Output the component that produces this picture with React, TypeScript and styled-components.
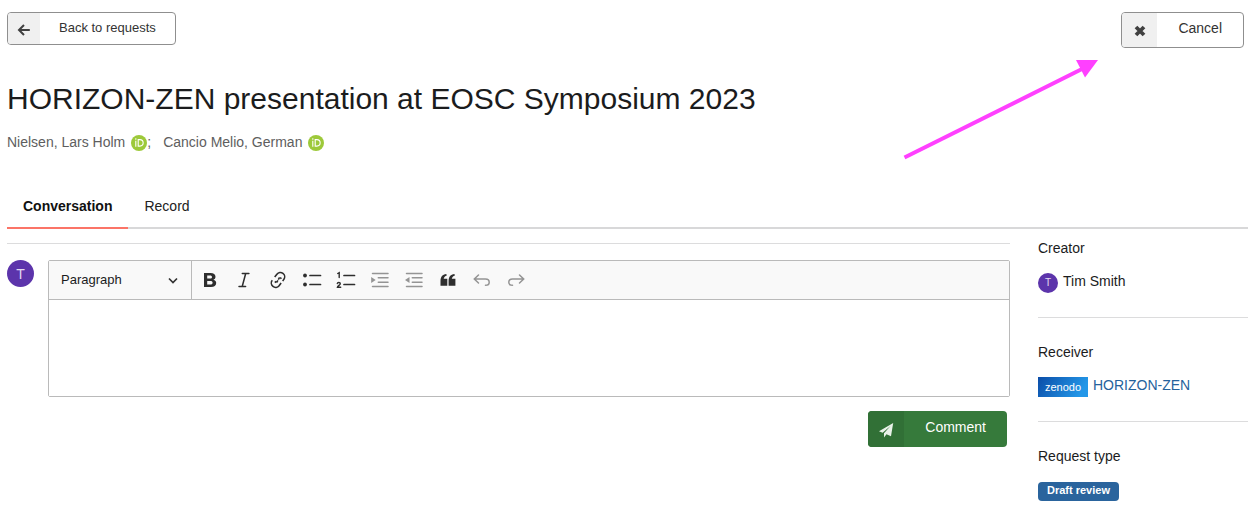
import React from 'react';
import styled, { createGlobalStyle } from 'styled-components';

const GlobalStyle = createGlobalStyle`
  *, *::before, *::after { box-sizing: border-box; }
  body {
    margin: 0;
    background: #fff;
    color: #1b1c1d;
    font-family: "Liberation Sans", Arial, sans-serif;
    font-size: 14px;
    line-height: 20px;
  }
  button, select, textarea { font: inherit; color: inherit; margin: 0; }
`;

const Page = styled.div`
  position: relative;
  padding: 12px 7px 24px;
`;

const TopBar = styled.header`
  display: flex;
  justify-content: space-between;
  align-items: flex-start;
  height: 36px;
  padding-right: 4px;
`;

const LabeledButton = styled.button<{ $small?: boolean; $primary?: boolean }>`
  display: flex;
  align-items: stretch;
  height: ${p => (p.$small ? 33 : 36)}px;
  padding: 0;
  overflow: hidden;
  font-size: ${p => (p.$small ? 13 : 14)}px;
  border: ${p => (p.$primary ? 'none' : '1px solid #8f8f8f')};
  border-radius: 4px;
  background: ${p => (p.$primary ? '#367a3b' : '#fff')};
  color: ${p => (p.$primary ? '#fff' : '#333')};
  cursor: pointer;
`;

const ButtonIcon = styled.span<{ $small?: boolean; $primary?: boolean }>`
  display: flex;
  align-items: center;
  justify-content: center;
  width: ${p => (p.$small ? 32 : p.$primary ? 36 : 35)}px;
  padding-top: 2px;
  background: ${p => (p.$primary ? '#317036' : '#f0f0f0')};
`;

const ButtonText = styled.span<{ $small?: boolean }>`
  display: flex;
  align-items: center;
  padding: 0 ${p => (p.$small ? '19px 2px' : '21px 4px')};
`;

const Title = styled.h1`
  margin: 32px 0 0;
  font-size: 30px;
  line-height: 38px;
  font-weight: 400;
`;

const Authors = styled.ul`
  display: flex;
  gap: 12px;
  margin: 14px 0 0;
  padding: 0;
  list-style: none;
  color: #5e5e5e;
`;

const Author = styled.li`
  display: flex;
  align-items: center;
`;

const OrcidLink = styled.a`
  display: flex;
  margin: 2px 0 0 6px;
`;

const Tabs = styled.nav`
  display: flex;
  margin-top: 32px;
  border-bottom: 2px solid #d8d8d9;
`;

const Tab = styled.a<{ $active?: boolean }>`
  margin-bottom: -2px;
  padding: 12px 16px 11px;
  border-bottom: 2px solid ${p => (p.$active ? '#fb7467' : 'transparent')};
  color: ${p => (p.$active ? '#111' : '#222')};
  font-weight: ${p => (p.$active ? 700 : 400)};
  text-decoration: none;
`;

const Columns = styled.div`
  display: grid;
  grid-template-columns: minmax(0, 1fr) 210px;
  gap: 28px;
`;

const Conversation = styled.main`
  margin-top: 14px;
  padding-top: 16px;
  border-top: 1px solid #dcdcdd;
`;

const Compose = styled.form`
  display: grid;
  grid-template-columns: 27px minmax(0, 1fr);
  column-gap: 14px;
`;

const Avatar = styled.span<{ $size: number }>`
  display: flex;
  flex: none;
  align-items: center;
  justify-content: center;
  width: ${p => p.$size}px;
  height: ${p => p.$size}px;
  border-radius: 50%;
  background: #5c34ab;
  color: #e2daf0;
  font-size: ${p => (p.$size > 24 ? 14 : 10)}px;
`;

const Editor = styled.div`
  border: 1px solid #bababa;
  border-radius: 2px;
`;

const Toolbar = styled.div`
  display: flex;
  height: 39px;
  background: #f9f9f9;
  border-bottom: 1px solid #bababa;
`;

const StylePicker = styled.label`
  display: grid;
  align-items: center;
  width: 143px;
  border-right: 1px solid #bababa;
  & > * { grid-area: 1 / 1; }
  & > svg { justify-self: end; margin-right: 12px; pointer-events: none; }
`;

const StyleSelect = styled.select`
  width: 100%;
  height: 38px;
  padding: 0 32px 0 12px;
  appearance: none;
  border: 0;
  background: transparent;
  font-size: 13px;
`;

const Tools = styled.div`
  display: flex;
  align-items: center;
  padding-left: 1px;
`;

const Tool = styled.button`
  display: flex;
  align-items: center;
  justify-content: center;
  width: 34px;
  height: 34px;
  padding: 0;
  border: 0;
  background: transparent;
  color: #2e2e2e;
  &:disabled { color: #949494; }
`;

const CommentBox = styled.textarea`
  display: block;
  width: 100%;
  height: 96px;
  padding: 12px;
  border: 0;
  outline: 0;
  resize: none;
  background: #fff;
`;

const Actions = styled.div`
  grid-column: 1 / -1;
  display: flex;
  justify-content: flex-end;
  padding: 14px 3px 0 0;
`;

const Sidebar = styled.aside`
  padding-top: 9px;
`;

const Fact = styled.section`
  height: 104px;
  & + & { border-top: 1px solid #dcdcdd; padding-top: 24px; }
  &:first-child { height: 79px; }
`;

const FactTitle = styled.h2`
  margin: 0 0 12px;
  font-size: 14px;
  line-height: 20px;
  font-weight: 400;
`;

const FactValue = styled.div`
  display: flex;
  align-items: center;
  gap: 5px;
  height: 22px;
  & > svg, & > span { margin-top: 4px; }
`;

const CommunityLink = styled.a`
  color: #25629c;
  text-decoration: none;
`;

const Badge = styled.strong`
  display: inline-block;
  margin-top: 4px;
  padding: 0 9px 2px;
  border-radius: 4px;
  background: #2a649d;
  color: #fff;
  font-size: 11px;
  line-height: 17px;
`;

const Pointer = styled.svg`
  position: absolute;
  top: 56px;
  right: 153px;
  pointer-events: none;
`;

const Orcid = () => (
  <svg width="16" height="16" viewBox="0 0 16 16" aria-hidden="true">
    <circle cx="8" cy="8" r="8" fill="#9dc93a" />
    <g fill="none" stroke="#fff" strokeWidth="1.1">
      <path d="M4.8 5.7v6M7.2 4.6v6.5h1.7a3.2 3.2 0 0 0 0-6.5z" />
    </g>
    <circle cx="4.8" cy="3.9" r=".75" fill="#fff" />
  </svg>
);

const Zenodo = () => (
  <svg width="50" height="20" viewBox="0 0 50 20" role="img" aria-label="zenodo">
    <defs>
      <linearGradient id="zenodo-blue" x1="0" y1="0" x2="1" y2="0.25">
        <stop offset="0" stopColor="#0b4da8" />
        <stop offset="1" stopColor="#2397e8" />
      </linearGradient>
    </defs>
    <rect width="50" height="20" fill="url(#zenodo-blue)" />
    <text x="25" y="14" textAnchor="middle" fontSize="11" fill="#fff">zenodo</text>
  </svg>
);

const glyphs: Record<string, React.ReactNode> = {
  Bold: <path fillRule="evenodd" fill="currentColor" d="M4 3h6.500c3.200 0 5 1.400 5 3.700 0 1.500-.8 2.600-2.100 3 1.800.4 2.800 1.600 2.800 3.300 0 2.500-2 4-5.200 4H4zm3.200 2.400v3.200h2.800c1.300 0 2-.6 2-1.600s-.7-1.600-2-1.600zm0 5.600v3.600h3.200c1.400 0 2.200-.6 2.200-1.800s-.8-1.800-2.300-1.800z" />,
  Italic: <path d="M8.300 3.500h6.600M5 16.500h6.600M11.700 3.500l-3.500 13" strokeWidth="1.5" />,
  Link: <path strokeWidth="1.600" strokeLinecap="butt" d="M6.700 7.100l2.200-2.900a4.300 4.300 0 0 1 6.900 5.200l-1.100 1.700M4.300 10.300a4.300 4.300 0 0 0 6.800 5.500l2-2.800M8.500 12.600l1.400-2.300M10.300 9.700l1.300-2.300M8 12.600l-1.100-1.200M12.200 7.500l1.200 1.300" />,
  'Bulleted list': <><path d="M8 5.500h10.500M8 14.500h10.500" /><circle cx="3" cy="5.500" r="1.900" fill="currentColor" stroke="none" /><circle cx="3" cy="14.500" r="1.900" fill="currentColor" stroke="none" /></>,
  'Numbered list': <><path d="M8 5.500h10.500M8 14.500h10.500" /><path strokeWidth="1.400" d="M1.700 3.500l1.500-.8v4.800M1.300 13.500c.2-1.400 3-1.400 3 .2 0 1.300-2.700 2-2.900 3.600h3.300" /></>,
  Indent: <><path strokeWidth="1.500" d="M2.500 3.500h15.500M8.300 7.800h9.700M8.300 12.200h9.700M2.500 16.500h15.500" /><path d="M1.200 7v6l4.500-3z" fill="currentColor" stroke="none" /></>,
  Outdent: <><path strokeWidth="1.500" d="M2.500 3.500h15.500M8.300 7.800h9.700M8.300 12.200h9.700M2.500 16.500h15.500" /><path d="M5.500 7v6L1 10z" fill="currentColor" stroke="none" /></>,
  'Block quote': <path fill="currentColor" stroke="none" d="M2.500 15.800V11C2.500 6.800 4.500 4.300 8.300 4l.5 1.400C7 6 6 7 5.700 8.800h3.600v7zM10.600 15.800V11c0-4.200 2-6.700 5.800-7l.5 1.400c-1.800.6-2.800 1.600-3.100 3.400h3.600v7z" />,
  Undo: <path strokeWidth="1.500" d="M6.500 5L2.300 9l4.200 4M2.500 9H13.500c2.600 0 3.700 1.300 3.700 3.200s-1.200 3.100-3.700 3.100" />,
  Redo: <path strokeWidth="1.500" d="M13.500 5l4.200 4-4.200 4M17.500 9H6.500c-2.600 0-3.700 1.300-3.700 3.200s1.200 3.100 3.700 3.100" />,
};

const tools = ['Bold', 'Italic', 'Link', 'Bulleted list', 'Numbered list', 'Indent', 'Outdent', 'Block quote', 'Undo', 'Redo'];
const inactive = ['Indent', 'Outdent', 'Undo', 'Redo'];

export default function App() {
  return (
    <>
      <GlobalStyle />
      <Page>
        <TopBar>
          <LabeledButton type="button" $small>
            <ButtonIcon $small>
              <svg width="14" height="14" viewBox="0 0 14 14" fill="none" stroke="#404040" strokeWidth="2" aria-hidden="true">
                <path d="M7 2L2 7l5 5M2.200 7h10.600" />
              </svg>
            </ButtonIcon>
            <ButtonText $small>Back to requests</ButtonText>
          </LabeledButton>
          <LabeledButton type="button">
            <ButtonIcon>
              <svg width="12" height="12" viewBox="0 0 12 12" stroke="#404040" strokeWidth="3.800" aria-hidden="true">
                <path d="M2 2l8 8M10 2l-8 8" />
              </svg>
            </ButtonIcon>
            <ButtonText>Cancel</ButtonText>
          </LabeledButton>
        </TopBar>

        <Title>HORIZON-ZEN presentation at EOSC Symposium 2023</Title>
        <Authors>
          <Author>Nielsen, Lars Holm<OrcidLink href="#" aria-label="ORCID profile"><Orcid /></OrcidLink>;</Author>
          <Author>Cancio Melio, German<OrcidLink href="#" aria-label="ORCID profile"><Orcid /></OrcidLink></Author>
        </Authors>

        <Tabs>
          <Tab href="#conversation" $active>Conversation</Tab>
          <Tab href="#record">Record</Tab>
        </Tabs>

        <Columns>
          <Conversation>
            <Compose>
              <Avatar $size={27}>T</Avatar>
              <Editor>
                <Toolbar>
                  <StylePicker>
                    <StyleSelect aria-label="Heading" defaultValue="Paragraph">
                      <option>Paragraph</option>
                    </StyleSelect>
                    <svg width="12" height="12" viewBox="0 0 12 12" fill="none" stroke="#333" strokeWidth="1.700" aria-hidden="true">
                      <path d="M2 4.500l4 4 4-4" />
                    </svg>
                  </StylePicker>
                  <Tools>
                    {tools.map(name => (
                      <Tool key={name} type="button" aria-label={name} disabled={inactive.includes(name)}>
                        <svg width="20" height="20" viewBox="0 0 20 20" fill="none" aria-hidden="true">
                          <g stroke={name === 'Bold' ? 'none' : 'currentColor'} strokeWidth="1.700" strokeLinecap="round">
                            {glyphs[name]}
                          </g>
                        </svg>
                      </Tool>
                    ))}
                  </Tools>
                </Toolbar>
                <CommentBox aria-label="Comment text" />
              </Editor>
              <Actions>
                <LabeledButton type="submit" $primary>
                  <ButtonIcon $primary>
                    <svg width="16" height="16" viewBox="0 0 16 16" fill="#e9f2e9" aria-hidden="true">
                      <path d="M15.200 1L13 14.200 8.500 12.300 6 15.500v-4.200L12.500 4 4.600 10.700 1 9.200z" />
                    </svg>
                  </ButtonIcon>
                  <ButtonText>Comment</ButtonText>
                </LabeledButton>
              </Actions>
            </Compose>
          </Conversation>

          <Sidebar>
            <Fact>
              <FactTitle>Creator</FactTitle>
              <FactValue><Avatar $size={20}>T</Avatar>Tim Smith</FactValue>
            </Fact>
            <Fact>
              <FactTitle>Receiver</FactTitle>
              <FactValue><Zenodo /><CommunityLink href="#">HORIZON-ZEN</CommunityLink></FactValue>
            </Fact>
            <Fact>
              <FactTitle>Request type</FactTitle>
              <Badge>Draft review</Badge>
            </Fact>
          </Sidebar>
        </Columns>

        <Pointer width="202" height="108" viewBox="0 0 202 108" aria-hidden="true">
          <path d="M4.500 101.500L184 12" stroke="#ff40ff" strokeWidth="4" />
          <path d="M176 4h22l-13 17.500z" fill="#ff40ff" />
        </Pointer>
      </Page>
    </>
  );
}
